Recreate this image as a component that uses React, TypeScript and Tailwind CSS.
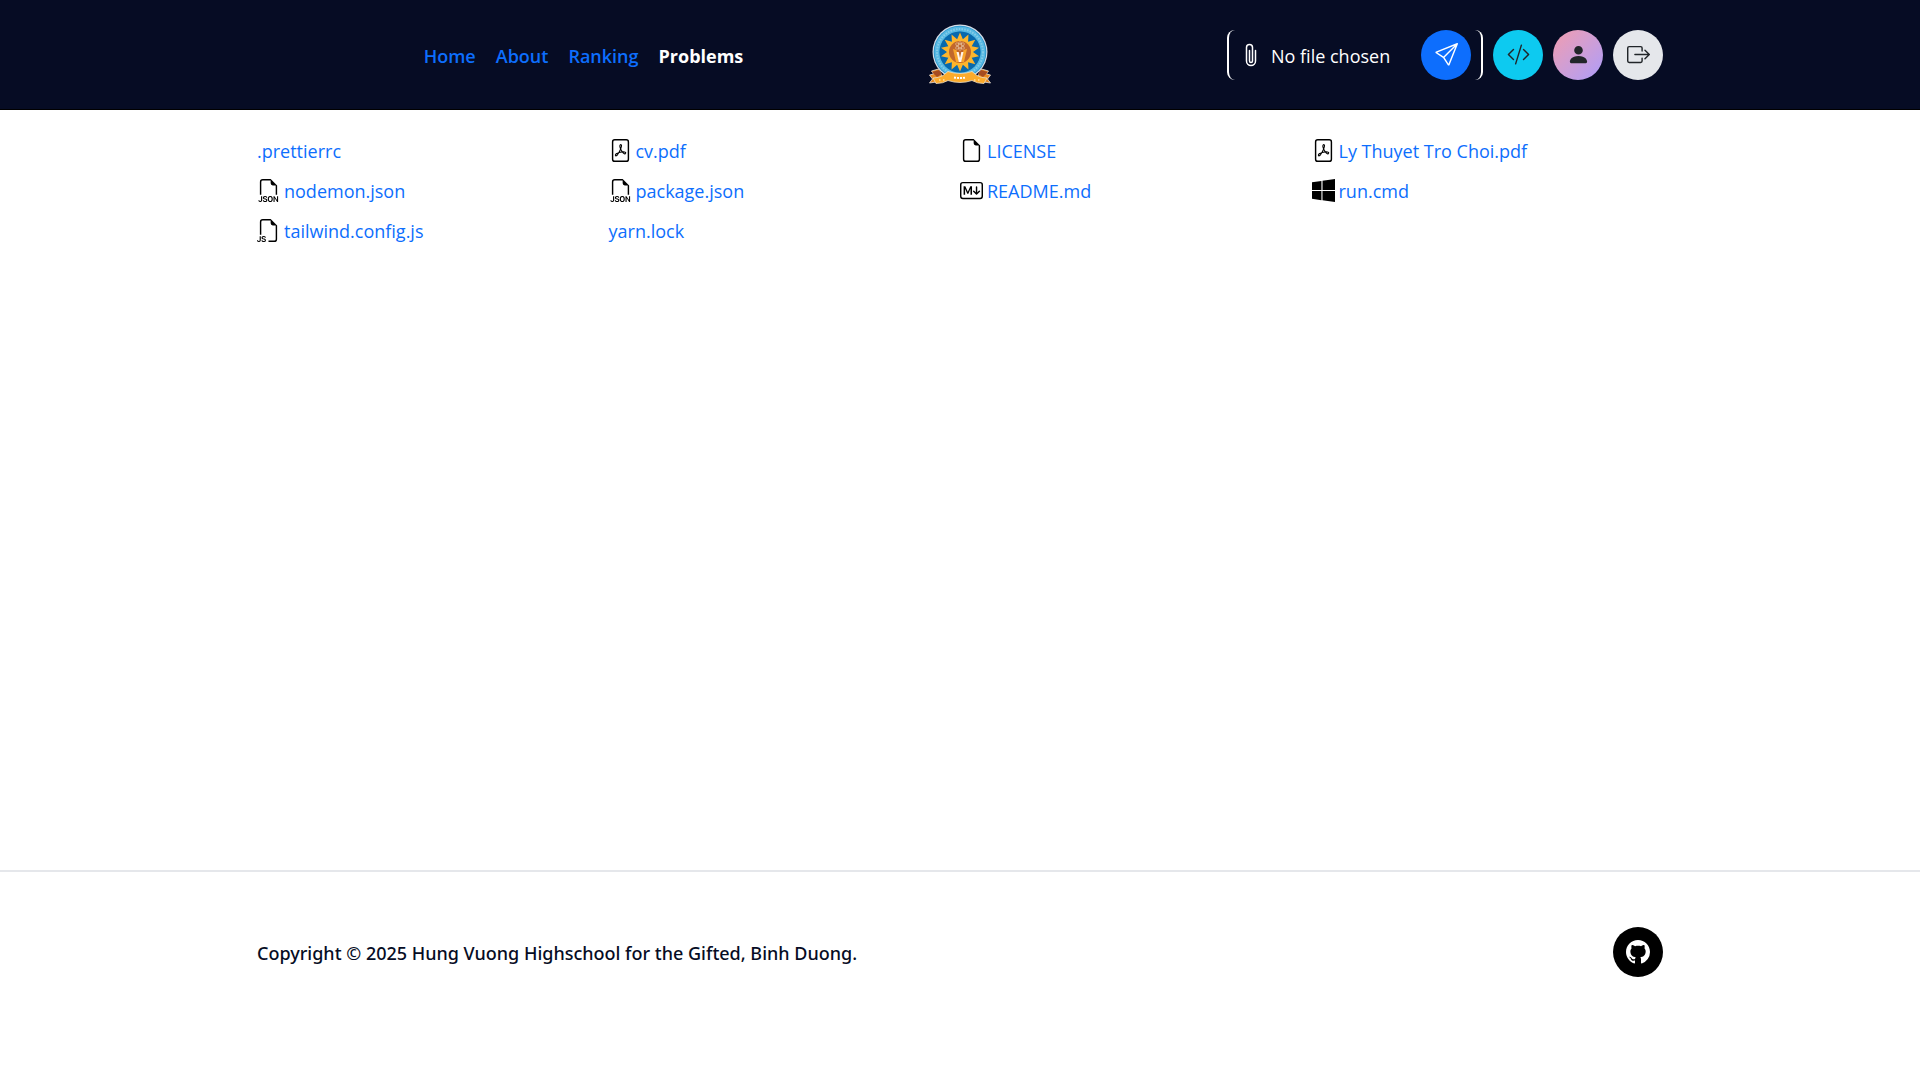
import React from "react";
import {
  BsBoxArrowRight,
  BsCodeSlash,
  BsFileEarmark,
  BsFilePdf,
  BsFiletypeJs,
  BsFiletypeJson,
  BsGithub,
  BsMarkdown,
  BsPaperclip,
  BsPersonFill,
  BsSend,
  BsWindows,
} from "react-icons/bs";
import type { IconType } from "react-icons";

type FileEntry = { name: string; icon?: IconType };

const files: FileEntry[] = [
  { name: ".prettierrc" },
  { name: "cv.pdf", icon: BsFilePdf },
  { name: "LICENSE", icon: BsFileEarmark },
  { name: "Ly Thuyet Tro Choi.pdf", icon: BsFilePdf },
  { name: "nodemon.json", icon: BsFiletypeJson },
  { name: "package.json", icon: BsFiletypeJson },
  { name: "README.md", icon: BsMarkdown },
  { name: "run.cmd", icon: BsWindows },
  { name: "tailwind.config.js", icon: BsFiletypeJs },
  { name: "yarn.lock" },
];

const links = ["Home", "About", "Ranking", "Problems"];

function sunPoints(cx: number, cy: number, outer: number, inner: number, rays: number) {
  return Array.from({ length: rays * 2 }, (_, i) => {
    const r = i % 2 === 0 ? outer : inner;
    const a = (Math.PI * i) / rays - Math.PI / 2;
    return `${(cx + r * Math.cos(a)).toFixed(2)},${(cy + r * Math.sin(a)).toFixed(2)}`;
  }).join(" ");
}

function SchoolLogo() {
  return (
    <svg viewBox="0 2 64 64" className="size-16" role="img" aria-label="School logo">
      <circle cx="32" cy="31" r="27.5" fill="#d5dde6" />
      <circle cx="32" cy="31" r="26.3" fill="#2590c8" />
      <circle cx="32" cy="31" r="23" fill="none" stroke="#56b8e2" strokeWidth="5" />
      <circle cx="32" cy="31" r="23" fill="none" stroke="#84cce9" strokeWidth="2" strokeDasharray="1.6 1.2" />
      <circle cx="32" cy="31" r="20.5" fill="#0869ad" />
      <polygon points={sunPoints(32, 31, 19.5, 13, 14)} fill="#fdb52c" />
      <circle cx="32" cy="31" r="11" fill="#c1672c" />
      <g fill="none" stroke="#e9c9a8" strokeWidth="0.6">
        <ellipse cx="32" cy="25" rx="5" ry="1.8" transform="rotate(30 32 25)" />
        <ellipse cx="32" cy="25" rx="5" ry="1.8" transform="rotate(-30 32 25)" />
        <ellipse cx="32" cy="25" rx="1.8" ry="4.5" />
      </g>
      <path d="M25 28l3.500 1 2.500 12h-3zM39 28l-3.500 1-2.500 12h3z" fill="#f8a52b" />
      <path d="M28.500 31h2.200l1.300 6 1.300-6h2.200l-2.300 10h-2.400z" fill="#fff3e8" />
      <path d="M1.500 54l4-1-2-3 7-2 4 8-6 5-7 1 3-4zM62.500 54l-4-1 2-3-7-2-4 8 6 5 7 1-3-4z" fill="#e88a20" stroke="#e7e2dc" strokeWidth="0.8" />
      <path d="M4 51l7-2 3 4-5 3zM60 51l-7-2-3 4 5 3z" fill="#a54c20" />
      <path d="M5 57q6 0 10-2.500l5-4q12 4 24 0l5 4q4 2.500 10 2.500l-3 5.500q-7 0-12-3-12 4-24 0-5 3-12 3z" fill="#fcab2b" stroke="#e9ddc8" strokeWidth="0.8" />
      <path d="M26 56.500q6 1 12 0" fill="none" stroke="#fff" strokeWidth="2" strokeDasharray="2 1" />
      <path d="M11 59h7M46 59h7" stroke="#ffe3a5" strokeWidth="1.500" strokeDasharray="1.500 2.500" />
    </svg>
  );
}

const round = "flex size-[50px] shrink-0 items-center justify-center rounded-full";

export default function App() {
  return (
    <div className="flex min-h-screen flex-col bg-white font-['Open_Sans','Noto_Sans',sans-serif] text-lg text-[#060c24]">
      <header className="border-b border-black bg-[#060c24]">
        <div className="mx-auto flex h-[109px] w-full max-w-[1406px] items-center">
          <nav className="flex flex-1 justify-center gap-5 pt-0.5 font-semibold">
            {links.map((l) => (
              <a key={l} href="#" className={l === "Problems" ? "font-bold text-white" : "text-[#0d6efd]"}>
                {l}
              </a>
            ))}
          </nav>
          <a href="#" aria-label="Homepage" className="flex w-[100px] justify-center">
            <SchoolLogo />
          </a>
          <div className="flex flex-1 items-center justify-end gap-2.5">
            <form className="flex w-64 items-center justify-between rounded-lg border-x-2 border-white pr-2.5" onSubmit={(e) => e.preventDefault()}>
              <label className="flex cursor-pointer items-center gap-2 pl-2.5 text-white">
                <BsPaperclip className="size-6" />
                <span className="pt-0.5">No file chosen</span>
                <input type="file" className="sr-only" />
              </label>
              <button type="submit" aria-label="Submit file" className={`${round} bg-[#0d6efd] text-white`}>
                <BsSend className="size-[23px]" />
              </button>
            </form>
            <button aria-label="Code editor" className={`${round} bg-[#0dcaf0] text-[#212529]`}>
              <BsCodeSlash className="size-[23px]" />
            </button>
            <button aria-label="Profile" className={`${round} bg-linear-to-br from-[#f19cae] to-[#ac9cfa] text-[#212529]`}>
              <BsPersonFill className="size-[23px]" />
            </button>
            <button aria-label="Log out" className={`${round} bg-gray-200 text-[#212529]`}>
              <BsBoxArrowRight className="size-[23px]" />
            </button>
          </div>
        </div>
      </header>

      <main className="mx-auto w-full max-w-[1406px] flex-1 pt-5">
        <ul className="grid grid-cols-4">
          {files.map(({ name, icon: Icon }) => (
            <li key={name} className="flex h-10 items-center gap-1">
              {Icon && <Icon className="size-[23px] text-black" />}
              <a href="#" className="pt-0.5 text-[#0d6efd]">
                {name}
              </a>
            </li>
          ))}
        </ul>
      </main>

      <footer className="border-t-2 border-gray-200 pt-[55px] pb-[103px]">
        <div className="mx-auto flex w-full max-w-[1406px] items-center justify-between">
          <p className="pt-0.5 font-['Noto_Sans','Open_Sans',sans-serif] font-medium">
            Copyright © 2025 Hung Vuong Highschool for the Gifted, Binh Duong.
          </p>
          <a href="#" aria-label="GitHub" className={`${round} bg-black text-white`}>
            <BsGithub className="size-6" />
          </a>
        </div>
      </footer>
    </div>
  );
}
